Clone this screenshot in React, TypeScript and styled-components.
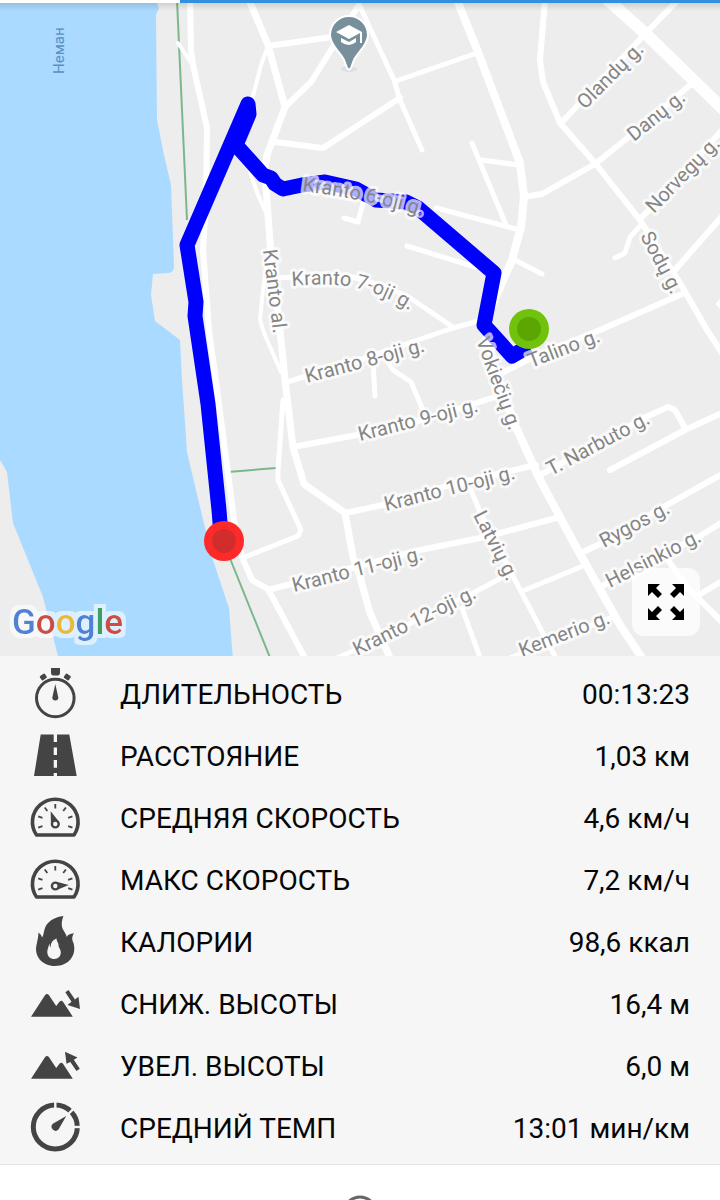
import React from 'react';
import styled, { createGlobalStyle } from 'styled-components';

const GlobalStyle = createGlobalStyle`
  *, *::before, *::after { box-sizing: border-box; }
  body { margin: 0; background: #fff; font-family: Roboto, "Liberation Sans", sans-serif; }
`;

const Screen = styled.main`
  display: flex;
  flex-direction: column;
  width: 100%;
  height: 100vh;
  overflow: hidden;
`;

const TabStrip = styled.div`
  display: grid;
  grid-template-columns: 1fr 3fr;
  flex: none;
  height: 3px;
  background: #fff;
`;

const TabIndicator = styled.div`
  grid-column: 2;
  background: #3390e0;
`;

const MapPanel = styled.section`
  position: relative;
  flex: none;
  width: 100%;
  aspect-ratio: 720 / 653;
`;

const MapDrawing = styled.svg`
  display: block;
  width: 100%;
  height: 100%;
`;

const Road = styled.path<{ $width?: number }>`
  fill: none;
  stroke: #fff;
  stroke-width: ${({ $width }) => $width ?? 6};
  stroke-linecap: round;
  stroke-linejoin: round;
`;

const Trail = styled.path`
  fill: none;
  stroke: #7bb78a;
  stroke-width: 2;
`;

const StreetLabel = styled.text`
  font-family: Roboto, "Liberation Sans", sans-serif;
  font-size: 20px;
  fill: #858585;
  stroke: rgba(255, 255, 255, 0.7);
  stroke-width: 6px;
  stroke-linejoin: round;
  paint-order: stroke;
`;

const RiverLabel = styled.text`
  font-family: Roboto, "Liberation Sans", sans-serif;
  font-size: 15px;
  fill: #5b8fc3;
`;

const Wordmark = styled.text`
  font-family: Roboto, "Liberation Sans", sans-serif;
  font-size: 35px;
  font-weight: 500;
`;

const ExpandButton = styled.button`
  position: absolute;
  right: 20px;
  bottom: 20px;
  display: grid;
  place-items: center;
  width: 68px;
  height: 68px;
  padding: 0;
  border: 0;
  border-radius: 12px;
  background: rgba(255, 255, 255, 0.75);
  cursor: pointer;
`;

const Stats = styled.dl`
  flex: none;
  margin: 0;
  padding: 8px 0 4px;
  background: #f6f6f6;
  border-bottom: 1px solid #e2e2e2;
`;

const StatRow = styled.div`
  display: flex;
  align-items: center;
  height: 62px;
  padding: 0 30px;
`;

const StatName = styled.dt`
  display: flex;
  flex: 1;
  align-items: center;
  gap: 40px;
  font-size: 28px;
  line-height: 36px;
  color: #060606;
`;

const StatValue = styled.dd`
  margin: 0;
  font-size: 28px;
  line-height: 36px;
  color: #060606;
`;

const StatIcon = styled.svg`
  flex: none;
  width: 50px;
  height: 50px;
  overflow: visible;
  color: #444;
`;

const Footer = styled.footer`
  display: flex;
  flex: 1;
  justify-content: center;
  min-height: 0;
  padding-top: 30px;
  overflow: hidden;
  background: #fff;
`;

const FooterIcon = styled.svg`
  flex: none;
  width: 36px;
  height: 36px;
`;

type RoadSpec = [string, number?];

const roads: RoadSpec[] = [
  ['M190 0L191 50L193 65L207 128L206 200L203 250L209 330L218 397L225 450L234 520L242 557L252 580L268 589L306 660', 6],
  ['M178 43L192 64', 4],
  ['M249 0L268 45L285 107L267 155L265 170L268 215L271 255L280 330L285 380L293 447L304 484L345 513L353 557L360 577L370 613L391 660', 7],
  ['M268 46L332 37', 6],
  ['M357 0L394 80L400 100L422 150', 5],
  ['M268 46L261 65L252 100', 4],
  ['M285 107L311 82L333 47L357 8', 6],
  ['M275 142L323 148L360 124L400 98', 6],
  ['M250 172L258 195L267 215', 4],
  ['M344 218L358 222L363 203', 5],
  ['M267 260L263 290L260 320L264 333L281 372', 4],
  ['M275 278L345 275L380 285L407 296L453 327', 5],
  ['M287 382L365 358L453 328L482 320', 5],
  ['M283 400L278 470L278 480L301 530L298 536L245 557', 5],
  ['M293 447L357 435L430 418L498 396', 6],
  ['M373 362L375 396', 5],
  ['M388 362L393 370L411 382L423 410', 5],
  ['M345 513L383 505L450 485L536 465', 6],
  ['M268 590L291 584L420 550L485 537L560 517', 6],
  ['M326 663L355 650L475 592L507 575', 5],
  ['M471 490L480 512L515 580L557 660', 5],
  ['M525 590L583 566', 5],
  ['M462 608L481 660', 5],
  ['M500 662L615 616', 5],
  ['M457 0L478 52L520 163L524 197L521 227L512 260L490 310L487 335L495 370L515 425L540 480L575 545L620 625L644 661', 8],
  ['M396 81L477 53', 5],
  ['M472 143L506 225', 5],
  ['M482 160L518 165', 5],
  ['M436 208L520 230', 5],
  ['M407 246L475 267', 5],
  ['M513 259L542 274', 5],
  ['M545 0L540 60L543 82L560 123L595 163L640 220L680 283L707 330L724 356', 6],
  ['M524 197L542 194L595 164L630 136L690 85', 6],
  ['M562 122L645 34L678 0', 6],
  ['M608 0L647 35L724 110', 12],
  ['M641 218L655 204L724 128', 6],
  ['M641 225L630 237L625 253L615 258', 5],
  ['M675 270L724 214', 6],
  ['M500 374L525 361L600 330L682 294', 6],
  ['M724 297L718 304L724 310', 4],
  ['M540 475L560 464L648 416L668 407L675 410L685 428', 6],
  ['M610 470L685 430L724 412', 6],
  ['M583 552L600 544L665 506L724 473', 6],
  ['M600 587L610 582L700 536L724 521', 6],
  ['M668 560L685 585L697 597L724 624', 6],
  ['M697 596L724 580', 6],
];

type LabelSpec = [string, number, number, number];

const streetLabels: LabelSpec[] = [
  ['Kranto al.', 263, 250, 83],
  ['Kranto 8-oji g.', 307, 383, -15],
  ['Kranto 9-oji g.', 360, 441, -14],
  ['Kranto 10-oji g.', 386, 511, -14],
  ['Kranto 11-oji g.', 294, 592, -14],
  ['Kranto 12-oji g.', 357, 656, -26],
  ['Kemerio g.', 522, 657, -21],
  ['Latvių g.', 473, 515, 63],
  ['Vokiečių g.', 476, 340, 70],
  ['Talino g.', 531, 368, -21],
  ['T. Narbuto g.', 551, 476, -28],
  ['Rygos g.', 604, 548, -28],
  ['Helsinkio g.', 610, 588, -27],
  ['Olandų g.', 585, 110, -45],
  ['Danų g.', 634, 142, -39],
  ['Norvegų g.', 654, 214, -46],
  ['Sodų g.', 640, 236, 62],
];

function RouteMap() {
  return (
    <MapDrawing viewBox="0 3 720 653" preserveAspectRatio="xMidYMid slice" role="img" aria-label="Kranto">
      <defs>
        <path id="street-6" d="M302 191C340 196 375 202 435 219" />
        <path id="street-7" d="M292 286C335 283 365 281 420 317" />
        <linearGradient id="top-shade" x1="0" y1="0" x2="0" y2="1">
          <stop offset="0" stopColor="#000" stopOpacity="0.12" />
          <stop offset="1" stopColor="#000" stopOpacity="0" />
        </linearGradient>
        <filter id="halo" x="-10%" y="-20%" width="120%" height="140%">
          <feMorphology in="SourceAlpha" operator="dilate" radius="4" result="spread" />
          <feFlood floodColor="#fff" floodOpacity="0.6" />
          <feComposite in2="spread" operator="in" result="glow" />
          <feMerge>
            <feMergeNode in="glow" />
            <feMergeNode in="SourceGraphic" />
          </feMerge>
        </filter>
      </defs>
      <rect x="0" y="0" width="720" height="660" fill="#ededed" />
      <path
        fill="#aadaff"
        d="M0 0H156L159 8L156 15L157 120L164 155L171 185L174 266Q174 273 168 273L153 274L151 295L155 321L180 340L182 380L187 452L200 507L213 560L229 608L233 660H59L43 597L13 523L7 472L0 460Z"
      />
      <Trail d="M177 0L187 220" />
      <Trail d="M228 472L276 468" />
      <Trail d="M229 556L271 660" />
      {roads.map(([d, width]) => (
        <Road key={d} d={d} $width={width} />
      ))}

      <path
        fill="none"
        stroke="#0000fd"
        strokeWidth="15"
        strokeLinejoin="round"
        strokeLinecap="butt"
        d="M529 346L512 356L484 325L494 273L418 208L406 202L376 200L356 189L325 182L302 185L283 189L275 184L271 178L263 175L236 145L249 114L248 104L187 245L196 302L195 316L208 404L219 510L221 535"
      />

      {streetLabels.map(([name, x, y, angle]) => (
        <StreetLabel key={name} transform={`translate(${x} ${y}) rotate(${angle})`}>
          {name}
        </StreetLabel>
      ))}
      <StreetLabel>
        <textPath href="#street-6">Kranto 6-oji g.</textPath>
      </StreetLabel>
      <StreetLabel>
        <textPath href="#street-7">Kranto 7-oji g.</textPath>
      </StreetLabel>
      <RiverLabel transform="translate(64 74) rotate(-90)">Неман</RiverLabel>

      <circle cx="529" cy="329" r="20" fill="#70c20a" />
      <circle cx="529" cy="329" r="12" fill="#5ca604" />
      <circle cx="224" cy="541" r="20" fill="#fd2a2a" />
      <circle cx="224" cy="541" r="12" fill="#d12d2d" />

      <ellipse cx="349" cy="69" rx="8" ry="3" fill="#000" opacity="0.06" />
      <path
        d="M347 68L344 60C340 52 330 45 330 35A19 19 0 0 1 368 35C368 45 358 52 354 60L351 68Q349 71 347 68Z"
        fill="#78909c"
        stroke="#fff"
        strokeWidth="2"
      />
      <path d="M349 25L336 32L349 39L360 33V43H362V32Z" fill="#fff" />
      <path d="M341 38L349 42L356 38V42Q349 48 341 42Z" fill="#fff" />

      <Wordmark x="12" y="634" filter="url(#halo)">
        <tspan fill="#4f82d6">G</tspan>
        <tspan fill="#cd4d44">o</tspan>
        <tspan fill="#e8ba35">o</tspan>
        <tspan fill="#4f82d6">g</tspan>
        <tspan fill="#3d9e5f">l</tspan>
        <tspan fill="#cd4d44">e</tspan>
      </Wordmark>
      <rect x="0" y="3" width="720" height="8" fill="url(#top-shade)" />
    </MapDrawing>
  );
}

function ExpandIcon() {
  const arrow = 'M0 0H12L8 4L14 10L10 14L4 8L0 12Z';
  return (
    <svg width="36" height="36" viewBox="0 0 36 36" aria-hidden="true">
      <path d={arrow} />
      <path d={arrow} transform="matrix(-1 0 0 1 36 0)" />
      <path d={arrow} transform="matrix(1 0 0 -1 0 36)" />
      <path d={arrow} transform="matrix(-1 0 0 -1 36 36)" />
    </svg>
  );
}

function Stopwatch() {
  return (
    <>
      <circle cx="25.3" cy="29" r="18.8" fill="none" stroke="currentColor" strokeWidth="3" />
      <path d="M21 -1H30V4Q30 6 28 6.5H23Q21 6 21 4Z" fill="currentColor" />
      <rect x="-3" y="-2.5" width="6" height="5" rx="1" fill="currentColor" transform="translate(13.3 8) rotate(-35)" />
      <rect x="-3" y="-2.5" width="6" height="5" rx="1" fill="currentColor" transform="translate(37.3 8) rotate(35)" />
      <path d="M25.3 15L28.3 28.5A3 3 0 1 1 22.3 28.5Z" fill="currentColor" />
    </>
  );
}

function RoadIcon() {
  return (
    <path
      fill="currentColor"
      fillRule="evenodd"
      d="M10.7 3.5H23.7V11H27V3.5H39.3L46.7 45H27V42H23.7V45H4ZM23.7 16.5V24H27V16.5ZM23.7 29V36.7H27V29Z"
    />
  );
}

function Gauge({ fast }: { fast?: boolean }) {
  return (
    <>
      <path
        d="M6.5 42A22.8 22.8 0 1 1 44 42Z"
        fill="none"
        stroke="currentColor"
        strokeWidth="3.6"
        strokeLinejoin="round"
      />
      {[-108, -72, -36, 0, 36, 72, 108].map((angle) => (
        <path
          key={angle}
          d="M25.3 11V15.5"
          stroke="currentColor"
          strokeWidth="1.8"
          transform={`rotate(${angle} 25.3 29)`}
        />
      ))}
      <circle cx="25.3" cy="31" r="3.4" fill="none" stroke="currentColor" strokeWidth="2.4" />
      <path
        d="M21.5 28.6L25.3 17.5L29.1 28.6Q25.3 25.4 21.5 28.6Z"
        fill="currentColor"
        transform={fast ? 'rotate(86 25.3 31)' : 'rotate(-20 25.3 31)'}
      />
    </>
  );
}

function Flame() {
  return (
    <path
      fill="currentColor"
      fillRule="evenodd"
      d="M33.5 -1C31.5 4 31 9 33.3 13C34.7 15.5 36 17 36.8 20C37.5 18 40 16.5 44 16.3C41.5 20 42 23 43.5 26C47 38 39 49 25 49C12 49 4 39 6.5 28C7.5 23 8.5 20 8.4 15.5C10.5 17 11.5 18.5 12 20.5C13.5 19 13.5 16 14.5 12.5C16.5 5 24 0 33.5 -1ZM26.5 21.5C22.5 23 20.5 26 20.7 30.5C19.8 29.5 19.7 28 19.3 26.5C19 29.5 17.4 31.5 17.3 35C17.3 39.5 20.5 42 24.3 42C29 42 31.5 38 30.6 34C30 31.5 28.5 30.5 28.5 28C28.5 25.5 26.5 24.5 26.5 21.5Z"
    />
  );
}

function Mountains({ up }: { up?: boolean }) {
  return (
    <>
      <path
        fill="currentColor"
        d="M1 37.7L15 16.2Q17 13.8 19 16.2L26.2 27L29.5 22.8Q31.3 20.8 33 22.8L42.8 37.7Z"
      />
      <path
        fill="currentColor"
        d={
          up
            ? 'M35 10.7L47.5 16.5L43.8 18.7L49.8 27.7L46.5 30L40.3 21L36.5 22.7Z'
            : 'M50 30L37.5 26L41.5 22.8L35.3 13.2L38.5 11L45 20.5L48.5 17.8Z'
        }
      />
    </>
  );
}

function Pace() {
  return (
    <>
      <circle cx="25.3" cy="24" r="22" fill="none" stroke="currentColor" strokeWidth="5" />
      {[0, 45, 90].map((angle) => (
        <path
          key={angle}
          d="M25.3 -2V6"
          stroke="#f6f6f6"
          strokeWidth="2.4"
          transform={`rotate(${angle} 25.3 24)`}
        />
      ))}
      <path d="M25.3 8.5L29.3 23.5A4 4 0 1 1 21.3 23.5Z" fill="currentColor" transform="rotate(45 25.3 24)" />
    </>
  );
}

const stats = [
  { name: 'ДЛИТЕЛЬНОСТЬ', value: '00:13:23', icon: <Stopwatch /> },
  { name: 'РАССТОЯНИЕ', value: '1,03 км', icon: <RoadIcon /> },
  { name: 'СРЕДНЯЯ СКОРОСТЬ', value: '4,6 км/ч', icon: <Gauge /> },
  { name: 'МАКС СКОРОСТЬ', value: '7,2 км/ч', icon: <Gauge fast /> },
  { name: 'КАЛОРИИ', value: '98,6 ккал', icon: <Flame /> },
  { name: 'СНИЖ. ВЫСОТЫ', value: '16,4 м', icon: <Mountains /> },
  { name: 'УВЕЛ. ВЫСОТЫ', value: '6,0 м', icon: <Mountains up /> },
  { name: 'СРЕДНИЙ ТЕМП', value: '13:01 мин/км', icon: <Pace /> },
];

export default function App() {
  return (
    <>
      <GlobalStyle />
      <Screen>
        <TabStrip>
          <TabIndicator />
        </TabStrip>
        <MapPanel>
          <RouteMap />
          <ExpandButton type="button" aria-label="Развернуть карту">
            <ExpandIcon />
          </ExpandButton>
        </MapPanel>
        <Stats>
          {stats.map(({ name, value, icon }) => (
            <StatRow key={name}>
              <StatName>
                <StatIcon viewBox="0 1 50 50" aria-hidden="true">
                  {icon}
                </StatIcon>
                {name}
              </StatName>
              <StatValue>{value}</StatValue>
            </StatRow>
          ))}
        </Stats>
        <Footer>
          <FooterIcon viewBox="0 0 36 36" aria-hidden="true">
            <circle cx="18" cy="18" r="16" fill="none" stroke="#666" strokeWidth="3" />
          </FooterIcon>
        </Footer>
      </Screen>
    </>
  );
}
